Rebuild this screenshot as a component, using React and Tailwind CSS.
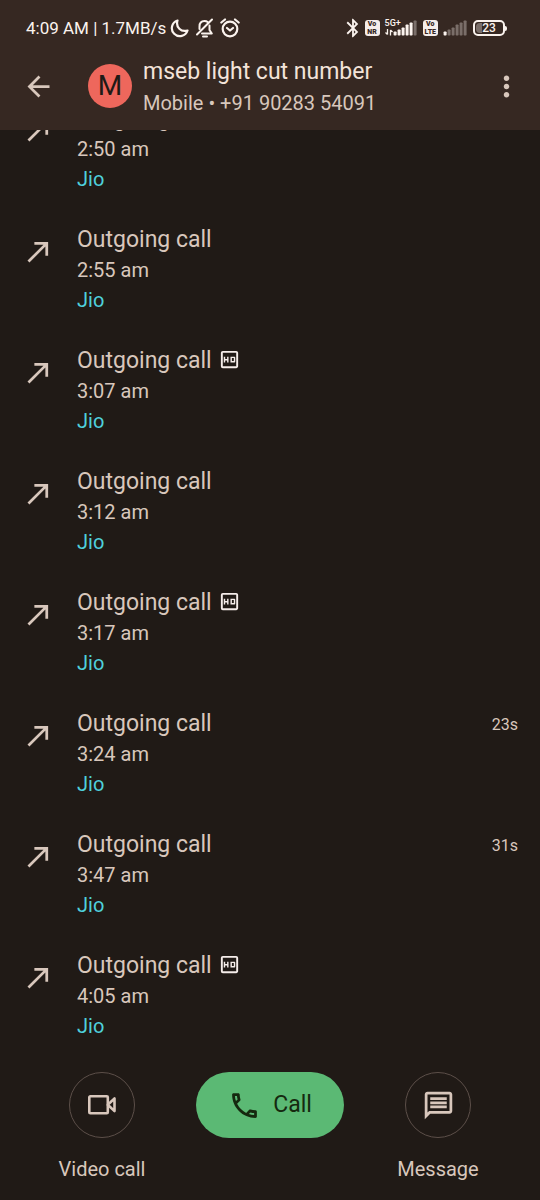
import { MdArrowBack, MdCallMade, MdMoreVert, MdOutlineCall, MdOutlineHd, MdOutlineMessage, MdBluetooth } from 'react-icons/md';

const calls = [
    { time: '2:50 am' },
    { time: '2:55 am' },
    { time: '3:07 am', hd: true },
    { time: '3:12 am' },
    { time: '3:17 am', hd: true },
    { time: '3:24 am', duration: '23s' },
    { time: '3:47 am', duration: '31s' },
    { time: '4:05 am', hd: true },
];

const SignalBars = ({ level }) => {
    const heights = [4, 6, 8, 11, 13, 15];

    return (
        <svg width="25" height="16" viewBox="0 0 25 16" aria-hidden="true">
            {heights.map((h, i) => (
                <rect
                    key={h}
                    x={i * 4 + 0.6}
                    y={15.5 - h}
                    width="3"
                    height={h}
                    rx="0.8"
                    fill={i < level ? '#fbf3ee' : '#7a6e69'}
                />
            ))}
        </svg>
    );
};

const VoBadge = ({ label }) => (
    <span className="flex h-4 min-w-[15px] flex-col items-center justify-center rounded-[3px] bg-[#f5edea] px-0.5 text-[7px] font-black leading-[8px] text-[#352722]">
        <span>Vo</span>
        <span>{label}</span>
    </span>
);

const StatusBar = () => (
    <div className="flex h-14 items-center justify-between pl-[26px] pr-[33px] text-[#fbf3ee]">
        <div className="flex items-center gap-1">
            <span className="text-[17px] leading-6">4:09 AM | 1.7MB/s</span>
            <div className="flex items-center gap-1.5">
                <svg width="19" height="20" viewBox="0 0 19 20" fill="none" stroke="currentColor" strokeWidth="2.200" strokeLinecap="round" strokeLinejoin="round">
                    <path d="M7.500 2.500A8 8 0 1 0 17.500 12.500C11 14.500 5.500 9 7.500 2.500Z" />
                </svg>
                <svg width="19" height="20" viewBox="0 0 19 20" fill="none" stroke="currentColor" strokeWidth="2" strokeLinecap="round" strokeLinejoin="round">
                    <path d="M4.500 11V8.500C4.500 5 6.500 3 9.500 3c1.200 0 2.300.3 3.100 1M14.500 7.500v4.500l2.300 3.500H7M17 1.500 2 16.500M8 18.500h4" />
                </svg>
                <svg width="20" height="20" viewBox="0 0 20 20" fill="none" stroke="currentColor" strokeWidth="2.200" strokeLinecap="round" strokeLinejoin="round">
                    <circle cx="10" cy="11" r="7.300" />
                    <path d="m7 10 3 2.500L13 10M1.300 4.500 5 1.500M18.700 4.500 15 1.500" />
                </svg>
            </div>
        </div>

        <div className="flex items-center gap-[5px]">
            <MdBluetooth size={22} className="-mx-1" />
            <VoBadge label="NR" />
            <div className="relative">
                <div className="pl-2">
                    <SignalBars level={5} />
                </div>
                <span className="absolute -top-0.5 left-0 text-[9px] font-medium leading-[10px]">5G+</span>
                <svg className="absolute bottom-0 left-0" width="8" height="7" viewBox="0 0 8 7" fill="none" stroke="currentColor" strokeWidth="1.3">
                    <path d="M2.500 0v5.500M.5 3.500l2 2M5.500 6.500V1M7.500 3l-2-2" />
                </svg>
            </div>
            <VoBadge label="LTE" />
            <SignalBars level={1} />
            <div className="flex items-center">
                <div className="relative flex h-4 w-8 items-center justify-center rounded-[5px] border-2 border-[#fbf3ee]">
                    <div className="absolute left-px top-px h-[10px] w-[6px] rounded-l-sm bg-[#7a6e69]"></div>
                    <span className="relative text-[12px] font-medium leading-3">23</span>
                </div>
                <div className="h-[5px] w-[2px] rounded-r-sm bg-[#fbf3ee]"></div>
            </div>
        </div>
    </div>
);

const CallRow = ({ call }) => (
    <li className="flex shrink-0 gap-[22px] px-[22px] pb-[15px] pt-4">
        <MdCallMade size={33} className="mt-[10px] shrink-0" />
        <div className="flex-1 leading-[30px]">
            <div className="flex items-start gap-1.5 text-[23px]">
                Outgoing call
                {call.hd && <MdOutlineHd size={23} className="mt-0.5 text-[#f5edea]" />}
            </div>
            <div className="text-[20px]">{call.time}</div>
            <div className="text-[20px] text-[#4fd0dc]">Jio</div>
        </div>
        {call.duration && <span className="text-[16px] leading-8">{call.duration}</span>}
    </li>
);

const App = () => {
    return (
        <div className="flex h-screen flex-col bg-[#201a16] font-['Roboto',sans-serif] text-[#d8c7bc]">
            <header className="shrink-0 bg-[#362822]">
                <StatusBar />
                <div className="flex h-[74px] items-start pl-[22px] pr-[17px]">
                    <button aria-label="Back" className="mt-[14px]">
                        <MdArrowBack size={33} />
                    </button>
                    <div className="ml-[33px] mt-2 flex size-11 items-center justify-center rounded-full bg-[#ee675c] text-[28px] leading-none text-[#201a16]">
                        M
                    </div>
                    <div className="ml-[11px] flex-1">
                        <h1 className="text-[23px] leading-8 text-[#f3e3d9]">mseb light cut number</h1>
                        <p className="text-[20px] leading-[30px]">Mobile • +91 90283 54091</p>
                    </div>
                    <button aria-label="More options" className="mt-[14px]">
                        <MdMoreVert size={33} />
                    </button>
                </div>
            </header>

            <main className="flex min-h-0 flex-1 flex-col justify-end overflow-hidden">
                <ul className="flex flex-col">
                    {calls.map((call) => (
                        <CallRow key={call.time} call={call} />
                    ))}
                </ul>
            </main>

            <footer className="grid h-36 shrink-0 grid-cols-3 items-start px-[18px] pt-4">
                <button className="flex flex-col items-center gap-4 text-[20px] leading-[30px]">
                    <span className="flex size-[66px] items-center justify-center rounded-full border border-[#5c4f49]">
                        <svg width="30" height="24" viewBox="0 0 30 24" fill="none" stroke="currentColor" strokeWidth="2.600" strokeLinejoin="round">
                            <rect x="2.300" y="3.300" width="18.500" height="17" rx="1" />
                            <path d="M20.800 11.800 27.500 5.500v12.600Z" />
                        </svg>
                    </span>
                    Video call
                </button>
                <button className="mx-auto flex h-[66px] items-center gap-3 rounded-full bg-[#5bb974] px-8 text-[23px] leading-8 text-[#15290f]">
                    <MdOutlineCall size={33} />
                    Call
                </button>
                <button className="flex flex-col items-center gap-4 text-[20px] leading-[30px]">
                    <span className="flex size-[66px] items-center justify-center rounded-full border border-[#5c4f49]">
                        <MdOutlineMessage size={33} />
                    </span>
                    Message
                </button>
            </footer>
        </div>
    );
};

export default App;
